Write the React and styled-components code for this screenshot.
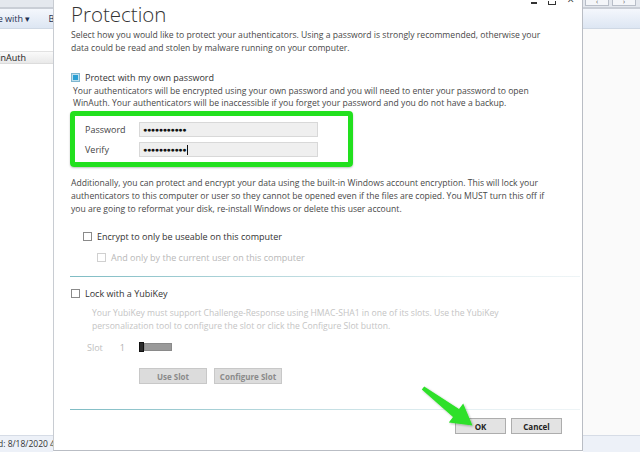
import React from 'react';
import styled, { createGlobalStyle } from 'styled-components';

const GlobalStyle = createGlobalStyle`
  html, body {
    margin: 0;
    padding: 0;
    width: 640px;
    height: 452px;
    overflow: hidden;
    background: #ffffff;
    font-family: "Open Sans", "Noto Sans", sans-serif;
    color: #404040;
  }
  * { box-sizing: border-box; }
`;

const Page = styled.div`
  position: relative;
  display: flex;
  width: 640px;
  height: 452px;
  overflow: hidden;
`;

/* ---------- explorer window behind the dialog ---------- */

const Pane = styled.div`
  display: flex;
  flex-direction: column;
  width: ${p => p.$width}px;
  flex: ${p => (p.$grow ? 1 : 'none')};
  height: 452px;
  overflow: hidden;
  background: #fbfbfb;
`;

const ChromeStrip = styled.div`
  height: 9px;
  background: #e4e8ee;
  border-bottom: 2px solid #c9ced6;
  display: flex;
  gap: 3px;
  padding-left: ${p => p.$pad || 0}px;
`;

const TinyKey = styled.div`
  width: 24px;
  height: 6px;
  border: 1px solid #b8bec8;
  border-top: none;
  background: #f4f6f9;
  font-size: 7px;
  line-height: 4px;
  text-align: center;
  color: #555;
`;

const Toolbar = styled.div`
  height: 20px;
  background: linear-gradient(#f4f7fc, #dde6f3);
  border-bottom: 1px solid #cfd8e4;
  display: flex;
  align-items: center;
  font-size: 9px;
  color: #1e3050;
  white-space: nowrap;
`;

const ToolText = styled.span`
  margin-left: ${p => p.$ml}px;
`;

const ListArea = styled.div`
  flex: 1;
  background: ${p => p.$bg || '#ffffff'};
  padding-top: ${p => p.$pt || 0}px;
`;

const HeaderRow = styled.div`
  height: 13px;
  background: linear-gradient(#fafafa, #e9e9e9);
  border-top: 1px solid #e2e2e2;
  border-bottom: 1px solid #dcdcdc;
  font-size: 9px;
  line-height: 12px;
  color: #222;
  white-space: nowrap;
  overflow: hidden;
`;

const CutText = styled.span`
  margin-left: ${p => p.$ml}px;
`;

const StatusBar = styled.div`
  height: 17px;
  background: #edf1f8;
  border-top: 1px solid #d6dce6;
  font-size: 8.5px;
  line-height: 16px;
  color: #333;
  white-space: nowrap;
  overflow: hidden;
`;

/* ---------- dialog ---------- */

const Dialog = styled.div`
  width: 530px;
  height: 451px;
  background: #ffffff;
  border-left: 1px solid #c8ccd2;
  border-right: 1px solid #b9bdc4;
  border-bottom: 1px solid #b9bdc4;
  padding: 0 20px 0 17px;
  display: flex;
  flex-direction: column;
`;

const TitleRow = styled.div`
  display: flex;
  justify-content: space-between;
  align-items: flex-start;
`;

const Title = styled.h1`
  margin: 3px 0 0 0;
  font-family: "Open Sans", "Noto Sans", sans-serif;
  font-weight: 300;
  font-size: 20.5px;
  line-height: 23px;
  color: #333;
`;

const WinControls = styled.div`
  display: flex;
  align-items: flex-end;
  gap: 11px;
  height: 6px;
  margin-right: -12px;
`;

const CtlMin = styled.span`
  width: 6px;
  height: 2px;
  margin-bottom: 2px;
  background: #333;
`;

const CtlMax = styled.span`
  width: 8px;
  height: 4px;
  border: 1px solid #333;
  border-top: none;
  margin-bottom: 1px;
`;

const CtlClose = styled.span`
  font-size: 12px;
  line-height: 12px;
  height: 6px;
  overflow: hidden;
  display: flex;
  align-items: flex-end;
  color: #333;
`;

const Para = styled.p`
  margin: ${p => p.$mt || 0}px 0 0 ${p => p.$ml || 0}px;
  font-size: 8.6px;
  line-height: ${p => p.$lh || 13}px;
  color: ${p => (p.$muted ? '#c4c4c4' : '#484848')};
  white-space: nowrap;
`;

const CheckRow = styled.div`
  display: flex;
  align-items: center;
  gap: 5px;
  height: 14px;
  margin: ${p => p.$mt || 0}px 0 0 ${p => p.$ml || 0}px;
  font-size: 9px;
  color: ${p => (p.$disabled ? '#b8b8b8' : '#333')};
  white-space: nowrap;
`;

const Box = styled.span`
  width: 9px;
  height: 9px;
  flex: none;
  border: 1px solid ${p => (p.$checked ? '#7fb6cf' : p.$disabled ? '#d0d0d0' : '#8a8a8a')};
  background: ${p => (p.$checked ? '#2a9fd4' : '#fff')};
  box-shadow: ${p => (p.$checked ? 'inset 0 0 0 1px #bfe0ee' : 'none')};
`;

const Highlight = styled.div`
  margin: 2px 0 0 -1px;
  width: 283px;
  border: 5px solid #22e01e;
  border-radius: 4px;
  box-shadow: 0 1px 2px rgba(0, 0, 0, 0.25);
  padding: 6px 0 5px 10px;
  display: flex;
  flex-direction: column;
  gap: 5px;
`;

const FieldRow = styled.div`
  display: flex;
  align-items: center;
  height: 15px;
`;

const FieldLabel = styled.span`
  width: 54px;
  font-size: 9px;
  color: #444;
`;

const Field = styled.div`
  width: 179px;
  height: 15px;
  background: #efefef;
  border: 1px solid #d8d8d8;
  display: flex;
  align-items: center;
  padding-left: 3px;
  font-size: 7px;
  letter-spacing: -0.3px;
  color: #111;
`;

const Caret = styled.span`
  display: inline-block;
  width: 1px;
  height: 10px;
  margin-left: 1px;
  background: #111;
`;

const Separator = styled.div`
  height: 1px;
  margin: ${p => p.$mt || 0}px 0 0 -1px;
  width: 510px;
  background: linear-gradient(to right, #7fbcc4, #b7d8dd 40%, #e3eff2 75%, #eef4f6);
`;

const SlotRow = styled.div`
  display: flex;
  align-items: center;
  height: 12px;
  margin: 8px 0 0 16px;
  font-size: 9px;
  color: #c0c0c0;
`;

const SlotNum = styled.span`
  margin-left: 17px;
  width: 19px;
  color: #b0b0b0;
`;

const Slider = styled.div`
  display: flex;
  align-items: center;
`;

const Thumb = styled.span`
  width: 5px;
  height: 10px;
  background: #2b2b2b;
  border: 1px solid #111;
`;

const Track = styled.span`
  width: 28px;
  height: 8px;
  background: #9a9a9a;
  border: 1px solid #8a8a8a;
`;

const ButtonRow = styled.div`
  display: flex;
  gap: ${p => p.$gap || 7}px;
  justify-content: ${p => (p.$end ? 'flex-end' : 'flex-start')};
  margin: ${p => p.$mt || 0}px 0 0 ${p => p.$ml || 0}px;
`;

const Btn = styled.button`
  width: ${p => p.$w || 68}px;
  height: 16px;
  padding: 0;
  font-family: "Open Sans", "Noto Sans", sans-serif;
  font-weight: 700;
  font-size: 8px;
  color: ${p => (p.$disabled ? '#8a8a8a' : '#222')};
  background: ${p => (p.$disabled ? '#dcdcdc' : '#e3e3e3')};
  border: 1px solid ${p => (p.$disabled ? '#c8c8c8' : '#adadad')};
  border-radius: 0;
`;

const Arrow = styled.svg`
  position: absolute;
  left: 0;
  top: 0;
  pointer-events: none;
`;

export default function App() {
  return (
    <>
      <GlobalStyle />
      <Page>
        <Pane $width={53}>
          <ChromeStrip />
          <Toolbar>
            <ToolText $ml={-6}>re with ▾</ToolText>
            <ToolText $ml={18}>B</ToolText>
          </Toolbar>
          <ListArea $pt={22}>
            <HeaderRow>
              <CutText $ml={-10}>WinAuth</CutText>
            </HeaderRow>
          </ListArea>
          <StatusBar>
            <CutText $ml={-2}>d: 8/18/2020 4:5</CutText>
          </StatusBar>
        </Pane>

        <Dialog>
          <TitleRow>
            <Title>Protection</Title>
            <WinControls>
              <CtlMin />
              <CtlMax />
              <CtlClose>×</CtlClose>
            </WinControls>
          </TitleRow>

          <Para $mt={3}>
            Select how you would like to protect your authenticators. Using a password is strongly recommended, otherwise your
            <br />
            data could be read and stolen by malware running on your computer.
          </Para>

          <CheckRow $mt={15}>
            <Box $checked />
            Protect with my own password
          </CheckRow>

          <Para $mt={1} $ml={2} $lh={12}>
            Your authenticators will be encrypted using your own password and you will need to enter your password to open
            <br />
            WinAuth. Your authenticators will be inaccessible if you forget your password and you do not have a backup.
          </Para>

          <Highlight>
            <FieldRow>
              <FieldLabel>Password</FieldLabel>
              <Field>●●●●●●●●●●●</Field>
            </FieldRow>
            <FieldRow>
              <FieldLabel>Verify</FieldLabel>
              <Field>
                ●●●●●●●●●●●
                <Caret />
              </Field>
            </FieldRow>
          </Highlight>

          <Para $mt={10}>
            Additionally, you can protect and encrypt your data using the built-in Windows account encryption. This will lock your
            <br />
            authenticators to this computer or user so they cannot be opened even if the files are copied. You MUST turn this off if
            <br />
            you are going to reformat your disk, re-install Windows or delete this user account.
          </Para>

          <CheckRow $mt={13} $ml={12}>
            <Box />
            Encrypt to only be useable on this computer
          </CheckRow>

          <CheckRow $mt={7} $ml={26} $disabled>
            <Box $disabled />
            And only by the current user on this computer
          </CheckRow>

          <Separator $mt={12} />

          <CheckRow $mt={9}>
            <Box />
            Lock with a YubiKey
          </CheckRow>

          <Para $mt={7} $ml={21} $muted>
            Your YubiKey must support Challenge-Response using HMAC-SHA1 in one of its slots. Use the YubiKey
            <br />
            personalization tool to configure the slot or click the Configure Slot button.
          </Para>

          <SlotRow>
            Slot
            <SlotNum>1</SlotNum>
            <Slider>
              <Thumb />
              <Track />
            </Slider>
          </SlotRow>

          <ButtonRow $mt={15} $ml={68}>
            <Btn $disabled>Use Slot</Btn>
            <Btn $disabled>Configure Slot</Btn>
          </ButtonRow>

          <Separator $mt={25} />

          <ButtonRow $mt={8} $end $gap={5}>
            <Btn $w={51}>OK</Btn>
            <Btn $w={51}>Cancel</Btn>
          </ButtonRow>
        </Dialog>

        <Pane $grow>
          <ChromeStrip $pad={2}>
            <TinyKey>‹</TinyKey>
            <TinyKey>›</TinyKey>
          </ChromeStrip>
          <Toolbar />
          <ListArea $bg="#fafafa" />
          <StatusBar />
        </Pane>

        <Arrow width="640" height="452" viewBox="0 0 640 452">
          <defs>
            <filter id="sh" x="-20%" y="-20%" width="140%" height="140%">
              <feDropShadow dx="1" dy="1" stdDeviation="1" floodColor="#000" floodOpacity="0.3" />
            </filter>
          </defs>
          <polygon
            filter="url(#sh)"
            fill="#2fe02a"
            points="421.8,389.6 424.2,386.4 459,409 463.2,403.4 472.5,425.5 448.8,422.6 453,417"
          />
        </Arrow>
      </Page>
    </>
  );
}
